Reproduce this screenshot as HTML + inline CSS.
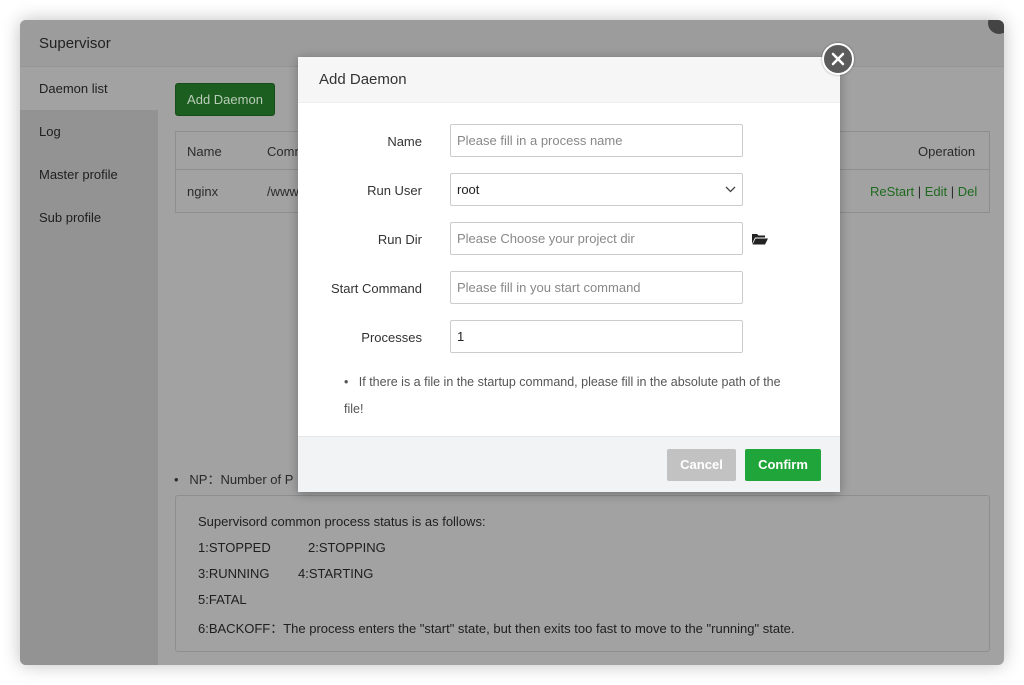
<!DOCTYPE html>
<html><head><style>
body{margin:0;width:1024px;height:685px;background:#fff;font-family:"Liberation Sans",sans-serif;position:relative;overflow:hidden;font-size:13px}
.win{position:absolute;left:20px;top:20px;width:984px;height:645px;background:#a2a2a2;border-radius:6px;overflow:hidden;box-shadow:0 0 18px rgba(0,0,0,.25)}
.hd{position:absolute;left:0;top:0;width:984px;height:46px;background:#9c9c9c;border-bottom:1px solid #959595;color:#222;font-size:15px}
.hd span{position:absolute;left:19px;top:15px}
.side{position:absolute;left:0;top:47px;width:138px;height:600px;background:#939393}
.side div{height:43px;line-height:43px;padding-left:19px;color:#1e1e1e;font-size:13px}
.side .act{background:#a2a2a2}
.btn{position:absolute;left:155px;top:63px;width:98px;height:31px;background:#1c5e1f;border:1px solid #174d19;border-radius:3px;color:#b9ccb9;font-size:13px;line-height:31px;text-align:center}
.tbl{position:absolute;left:155px;top:111px;width:813px;height:80px;border:1px solid #8e8e8e}
.tbl .r1{height:37px;border-bottom:1px solid #8e8e8e}
.t{position:absolute;color:#2a2a2a;font-size:13px}
.g{color:#1e6a1e}
.box{position:absolute;left:155px;top:475px;width:813px;height:155px;border:1px solid #8e8e8e;border-radius:3px}
.box div{position:absolute;left:22px;color:#1e1e1e;font-size:13px}
.modal{position:absolute;left:298px;top:57px;width:542px;height:435px;background:#fff;box-shadow:0 2px 10px rgba(0,0,0,.3)}
.mh{height:45px;background:#f6f6f6;border-bottom:1px solid #eee;font-size:15px;color:#333;line-height:45px;padding-left:21px}
.mf{position:absolute;left:0;bottom:0;width:542px;height:55px;background:#f1f3f4;border-top:1px solid #e7e7e7}
.lab{position:absolute;width:124px;text-align:right;left:0;font-size:13px;color:#333}
.inp{position:absolute;left:152px;width:293px;height:33px;border:1px solid #ccc;border-radius:2px;font-size:13px;color:#888;line-height:31px;padding-left:6px;box-sizing:border-box}
.close{position:absolute;left:822px;top:43px;width:28px;height:28px;border-radius:50%;background:#5b5b5b;border:2px solid #fff;box-shadow:0 0 2px rgba(0,0,0,.4)}
</style></head><body>
<div class="win">
 <div class="hd"><span>Supervisor</span></div>
 <div style="position:absolute;left:968px;top:-8px;width:22px;height:22px;border-radius:50%;background:#444"></div>
 <div class="side"><div class="act">Daemon list</div><div>Log</div><div>Master profile</div><div>Sub profile</div></div>
 <div class="btn">Add Daemon</div>
 <div class="tbl"><div class="r1"></div></div>
 <div class="t" style="left:167px;top:124px">Name</div>
 <div class="t" style="left:247px;top:124px">Comm</div>
 <div class="t" style="left:898px;top:124px">Operation</div>
 <div class="t" style="left:167px;top:164px">nginx</div>
 <div class="t" style="left:247px;top:164px">/www</div>
 <div class="t" style="left:850px;top:164px"><span class="g">ReStart</span> | <span class="g">Edit</span> | <span class="g">Del</span></div>
 <div class="t" style="left:154px;top:449px">•&nbsp;&nbsp; NP：Number of P</div>
 <div class="box">
  <div style="top:18px">Supervisord common process status is as follows:</div>
  <div style="top:44px">1:STOPPED</div><div style="left:132px;top:44px">2:STOPPING</div>
  <div style="top:70px">3:RUNNING</div><div style="left:122px;top:70px">4:STARTING</div>
  <div style="top:96px">5:FATAL</div>
  <div style="top:122px">6:BACKOFF：The process enters the "start" state, but then exits too fast to move to the "running" state.</div>
 </div>
</div>
<div class="modal">
 <div class="mh">Add Daemon</div>
 <div class="lab" style="top:77px">Name</div><div class="inp" style="top:67px">Please fill in a process name</div>
 <div class="lab" style="top:126px">Run User</div><div class="inp" style="top:116px;color:#222">root<svg style="position:absolute;right:6px;top:12px" width="11" height="7"><path d="M1 1l4.5 4.5L10 1" stroke="#444" fill="none" stroke-width="1.3"/></svg></div>
 <div class="lab" style="top:175px">Run Dir</div><div class="inp" style="top:165px">Please Choose your project dir</div>
 <svg style="position:absolute;left:454px;top:175px" width="16" height="13"><path d="M0 2h5l1.5 1.5H13v2H3L0 12z" fill="#222"/><path d="M3.5 6.5H16L13 12.5H0.5z" fill="#222"/></svg>
 <div class="lab" style="top:224px">Start Command</div><div class="inp" style="top:214px">Please fill in you start command</div>
 <div class="lab" style="top:273px">Processes</div><div class="inp" style="top:263px;color:#222">1</div>
 <div style="position:absolute;left:46px;top:312px;font-size:12.5px;color:#555;line-height:27px;width:470px">•&nbsp;&nbsp; If there is a file in the startup command, please fill in the absolute path of the<br>file!</div>
 <div class="mf">
  <div style="position:absolute;left:369px;top:12px;width:69px;height:32px;background:#c2c2c2;border-radius:2px;color:#fff;font-weight:bold;line-height:32px;text-align:center">Cancel</div>
  <div style="position:absolute;left:447px;top:12px;width:76px;height:32px;background:#20a53a;border-radius:2px;color:#fff;font-weight:bold;line-height:32px;text-align:center">Confirm</div>
 </div>
</div>
<div class="close"><svg width="28" height="28"><path d="M9 9l10 10M19 9L9 19" stroke="#fff" stroke-width="2.5" stroke-linecap="round"/></svg></div>
</body></html>
